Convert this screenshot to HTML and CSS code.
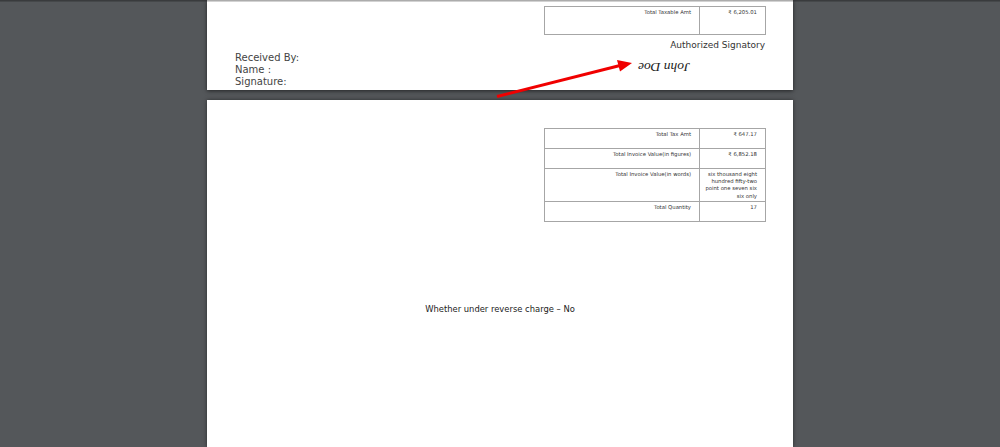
FILE: index.html
```html
<!DOCTYPE html>
<html lang="en">
<head>
<meta charset="utf-8">
<title>Invoice</title>
<link rel="stylesheet" href="styles.css">
</head>
<body>
<div class="viewer">
  <section class="page page-one">
    <div class="totals-wrap">
      <table class="totals">
        <tr class="h28"><td class="label">Total Taxable Amt</td><td class="value">₹ 6,205.01</td></tr>
      </table>
    </div>
    <div class="auth">Authorized Signatory</div>
    <div class="sign-row">
      <div class="received">
        <div>Received By:</div>
        <div>Name :</div>
        <div>Signature:</div>
      </div>
      <div class="signature">John Doe</div>
    </div>
  </section>
  <section class="page page-two">
    <div class="totals-wrap">
      <table class="totals">
        <tr class="h20"><td class="label">Total Tax Amt</td><td class="value">₹ 647.17</td></tr>
        <tr class="h20"><td class="label">Total Invoice Value(in figures)</td><td class="value">₹ 6,852.18</td></tr>
        <tr class="h34"><td class="label">Total Invoice Value(in words)</td><td class="value">six thousand eight hundred fifty-two point one seven six six only</td></tr>
        <tr class="h20"><td class="label">Total Quantity</td><td class="value">17</td></tr>
      </table>
    </div>
    <div class="reverse">Whether under reverse charge – No</div>
  </section>
  <svg class="arrow" width="150" height="50" viewBox="0 0 150 50" aria-hidden="true">
    <line x1="7" y1="44.5" x2="130" y2="13.5" stroke="#f00000" stroke-width="3"/>
    <polygon points="142,11 127,8 130,19.5" fill="#f00000"/>
  </svg>
</div>
</body>
</html>
```
FILE: styles.css
```css
* { box-sizing: border-box; }
html, body { margin: 0; height: 100%; }
body {
  overflow: hidden;
  background: #54575a;
  font-family: "DejaVu Sans", sans-serif;
  color: #333;
}
.viewer {
  position: relative;
  height: 447px;
  display: flex;
  flex-direction: column;
  align-items: center;
  gap: 10px;
  overflow: hidden;
}
.viewer::before {
  content: "";
  position: absolute;
  inset: 0 0 auto;
  height: 2px;
  z-index: 1;
  background: linear-gradient(rgba(0,0,0,.4), rgba(0,0,0,.1));
}
.page {
  width: 586px;
  background: #fff;
  flex: none;
}
.page-one {
  height: 90px;
  padding-top: 6px;
  box-shadow: 0 1px 4px rgba(0,0,0,.6);
  overflow: hidden;
}
.page-two {
  height: 347px;
  padding-top: 28px;
  box-shadow: 0 0 4px rgba(0,0,0,.5);
}
.totals-wrap {
  display: flex;
  justify-content: flex-end;
  padding-right: 27px;
}
.totals {
  width: 222px;
  border-collapse: collapse;
  table-layout: fixed;
  font-size: 5.3px;
  line-height: 7.2px;
  color: #333;
}
.totals td {
  border: 1.5px solid #a6a6a6;
  text-align: right;
  vertical-align: top;
  padding: 2px 8px 1px 4px;
}
.totals .value { width: 66px; }
.h28 { height: 28px; }
.h20 { height: 20px; }
.h34 { height: 33px; }
.auth {
  margin-top: 4px;
  padding-right: 28px;
  text-align: right;
  font-size: 9px;
  line-height: 12px;
}
.sign-row {
  display: flex;
  justify-content: space-between;
  padding: 1px 103px 0 28px;
}
.received {
  font-size: 10px;
  line-height: 12.2px;
  color: #444;
}
.signature {
  font-family: "Liberation Serif", serif;
  font-style: italic;
  font-size: 13.5px;
  margin-top: 9px;
  height: 12px;
  line-height: 12px;
  transform: rotate(180deg);
  color: #222;
}
.reverse {
  margin-top: 81px;
  text-align: center;
  font-size: 8.4px;
  line-height: 12px;
  color: #222;
}
.arrow {
  position: absolute;
  left: 490px;
  top: 52px;
}
```
